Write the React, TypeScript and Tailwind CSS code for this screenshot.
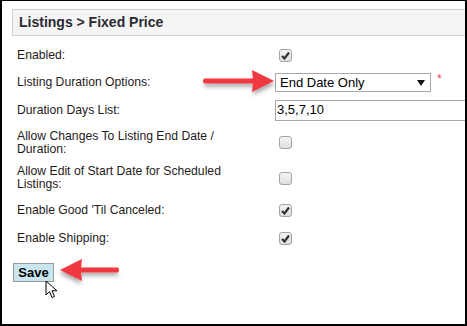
import React from "react";

function Check({ checked }: { checked?: boolean }) {
  return (
    <span className="ml-[4px] flex h-[13px] w-[13px] items-center justify-center rounded-[3px] border border-[#a3a3a3] bg-gradient-to-b from-[#f4f4f4] to-[#dedede]">
      {checked && (
        <svg width="9" height="9" viewBox="0 0 9 9">
          <path d="M1 5 L3.5 7.5 L8 1.5" fill="none" stroke="#333" strokeWidth="2.2" />
        </svg>
      )}
    </span>
  );
}

function Row({ h, label, children }: { h: string; label: React.ReactNode; children?: React.ReactNode }) {
  return (
    <div className={`flex items-center ${h}`}>
      <div className="w-[258px] shrink-0 leading-[13px]">{label}</div>
      {children}
    </div>
  );
}

// red callout arrow pointing right; len = shaft start to tip
function Arrow({ len, id, flip }: { len: number; id: string; flip?: boolean }) {
  const w = len + 8;
  const tip = len + 4;
  const base = tip - 22;
  return (
    <svg width={w} height="32" viewBox={`0 0 ${w} 32`} className={flip ? "-scale-x-100" : ""}>
      <defs>
        <filter id={id} x="-20%" y="-40%" width="140%" height="180%">
          <feDropShadow dx="1" dy="3" stdDeviation="2" floodColor="#000" floodOpacity="0.35" />
        </filter>
      </defs>
      <g filter={`url(#${id})`}>
        <path
          d={`M4 12.5 L${base + 1} 12.5 L${base} 4 L${tip} 15 L${base} 26 L${base + 1} 17.5 L4 17.5 Q2 15 4 12.5 Z`}
          fill="#f0393f"
        />
      </g>
    </svg>
  );
}

export default function App() {
  return (
    <div
      className="relative h-[326px] w-[467px] overflow-hidden border-2 border-t border-black bg-white text-[12.2px] text-[#1f1b1b]"
      style={{ fontFamily: '"Liberation Sans", Arial, sans-serif' }}
    >
      <div className="ml-[10px] mt-[8px] -mr-[20px] flex h-[27px] items-center border border-[#cfcfcf] bg-[#f5f5f5] pl-[6px] text-[14px] font-bold text-[#2a2a33]">
        Listings &gt; Fixed Price
      </div>

      <div className="ml-[15px] mt-[5px]">
        <Row h="h-[28px]" label="Enabled:">
          <Check checked />
        </Row>
        <Row h="h-[27px]" label="Listing Duration Options:">
          <div className="flex h-[19px] w-[156px] items-center justify-between border border-[#a9a9a9] bg-white pl-[4px] pr-[5px] text-[13px] text-black">
            <span>End Date Only</span>
            <svg width="8" height="6" viewBox="0 0 8 6">
              <path d="M0 0 L8 0 L4 6 Z" fill="#111" />
            </svg>
          </div>
          <span className="ml-[6px] -mt-[8px] text-[12px] text-[#e8474c]">*</span>
        </Row>
        <Row h="h-[28px]" label="Duration Days List:">
          <div className="flex h-[21px] w-[220px] shrink-0 items-center border border-[#a9a9a9] bg-white pl-[1px] text-[13px] text-black">
            3,5,7,10
          </div>
        </Row>
        <Row
          h="h-[37px]"
          label={
            <>
              Allow Changes To Listing End Date /
              <br />
              Duration:
            </>
          }
        >
          <Check />
        </Row>
        <Row
          h="h-[34px]"
          label={
            <>
              Allow Edit of Start Date for Scheduled
              <br />
              Listings:
            </>
          }
        >
          <Check />
        </Row>
        <Row h="h-[31px]" label="Enable Good 'Til Canceled:">
          <Check checked />
        </Row>
        <Row h="h-[24px]" label="Enable Shipping:">
          <Check checked />
        </Row>
      </div>

      <button className="ml-[11px] mt-[13px] flex h-[19px] w-[41px] items-center justify-center border border-[#9a9a9a] bg-[#c9e6f0] text-[13px] font-bold text-black">
        Save
      </button>

      {/* annotations */}
      <div className="absolute left-[198px] top-[65px]">
        <Arrow len={70} id="a1" />
      </div>
      <div className="absolute left-[54px] top-[254px]">
        <Arrow len={58} id="a2" flip />
      </div>
      <svg className="absolute left-[43px] top-[279px]" width="14" height="20" viewBox="0 0 14 20">
        <path d="M1 1 L1 15 L4.5 11.5 L7 17.5 L9.5 16.5 L7 10.8 L12 10.8 Z" fill="#fff" stroke="#000" strokeWidth="1" strokeLinejoin="round" />
      </svg>
    </div>
  );
}
